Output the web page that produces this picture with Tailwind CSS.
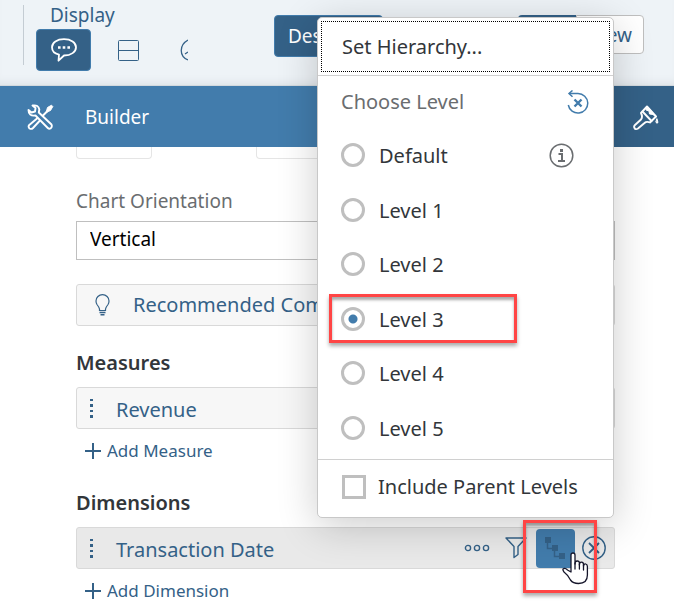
<!DOCTYPE html>
<html lang="en">
<head>
<meta charset="utf-8">
<title>Builder</title>
<script src="https://cdn.jsdelivr.net/npm/@tailwindcss/browser@4"></script>
</head>
<body class="relative min-h-screen overflow-x-hidden bg-white font-['Noto_Sans',sans-serif] text-[19px] leading-6 text-[#346187]">

<header class="flex h-[86px] items-start justify-between border-b border-[#d3d9de] bg-[#eef3f7] shadow-[inset_0_-8px_8px_-6px_#dde2e6]">
  <div class="flex">
    <div class="mt-[5px] ml-[23px] h-[60px] w-px bg-[#c4ccd3]"></div>
    <div class="ml-3 pt-[3px]">
      <div class="pl-[14px]">Display</div>
      <div class="mt-[2px] flex items-center">
        <button aria-label="Comments" class="flex h-[42px] w-[55px] items-center justify-center rounded border border-[#427cac] bg-[#346187]">
          <svg width="26" height="24" viewBox="0 0 26 24" fill="none" stroke="#fff" stroke-width="1.8" stroke-linejoin="round"><path d="M8 16.7C3.8 15.6 1 13 1 9.200C1 4.500 6 1.200 13 1.200S25 4.500 25 9.200S20 17.500 13 17.500L7.500 22.700Z"/><path d="M7 9.500h2.600M11.700 9.500h2.600M16.400 9.500h2.600" stroke-width="2.600"/></svg>
        </button>
        <button aria-label="Layout" class="ml-[27px] h-[21px] w-[21px]">
          <svg width="21" height="21" fill="none" stroke="#346187"><rect x=".5" y=".5" width="20" height="20" rx="1"/><path d="M0 10.500h21"/></svg>
        </button>
        <button aria-label="More display options" class="ml-[41px] h-6 w-2 overflow-hidden">
          <svg width="8" height="24" fill="none" stroke="#346187" stroke-width="1.300"><path d="M8 2C-1 7-1 18 8 22M5 16l3-2"/></svg>
        </button>
      </div>
    </div>
  </div>
  <div class="mt-[15px] mr-[30px] flex items-start">
    <button class="h-[42px] w-[109px] rounded border border-[#427cac] bg-[#346187] pl-[13px] text-left text-white">Design</button>
    <button aria-label="Edit mode" class="ml-[135px] h-[39px] w-[58px] rounded-l bg-[#346187]"></button>
    <button class="h-[39px] w-[68px] rounded-r border border-[#bfbfbf] bg-white pr-[11px] text-right">View</button>
  </div>
</header>

<div class="flex h-[61px] items-center bg-[#427cac] text-white">
  <svg class="ml-[27px]" width="27" height="26" viewBox="0 0 27 26" fill="none" stroke="#fff" stroke-width="1.900" stroke-linejoin="round" stroke-linecap="round"><path d="M5.500 1.500Q11.500 .5 12.300 5.500L11.800 8.500L24.500 20.500Q25.500 23 23.500 24.500Q22 25.200 20.800 24L8.500 11.500Q1.500 12.500 1.500 6L4.500 8.500L8 7.500L8.500 4Z"/><path d="M10 14.500L2 21.200Q1 23 2.500 24.500Q4.500 25.500 6 24L12.500 17"/><path d="M16 11.500L20 7.500"/><path d="M19.500 7L20.500 3.500L24.500 1.200L25.800 2.500L23.500 6.500L20 8Z" fill="#fff" stroke-width="1"/></svg>
  <h1 class="ml-[31px] flex-1">Builder</h1>
  <button aria-label="Styling" class="flex h-full w-[61px] items-center justify-center bg-[#346187]">
    <svg class="mt-[2px] ml-1" width="26" height="26" viewBox="0 0 26 26" fill="none" stroke="#fff" stroke-width="1.900" stroke-linejoin="round" stroke-linecap="round"><path d="M14 1.500L23 11.500L17 17.500Q13.500 16 11.500 18L5 23.500Q2.500 25 1.500 23Q.5 21.500 2 20L8 14.500Q10 12 8 8Z"/><path d="M9.500 6.500L18.500 16"/><path d="M14 1.500L13 5L16 6L16.500 9L20 9.500L23 11.500Z" fill="#fff" stroke-width="1"/><path d="M24 14L25 17.500Q24 19 23 17.500Z" fill="#fff" stroke-width="1"/></svg>
  </button>
</div>

<main class="pr-[59px] pl-[76px]">
  <div class="flex gap-[104px]">
    <div class="h-3 w-[76px] rounded-b border border-t-0 border-[#e5e5e5]"></div>
    <div class="h-3 w-[76px] rounded-b border border-t-0 border-[#e5e5e5]"></div>
  </div>
  <label for="orientation" class="mt-[30px] block text-[#6a6d70]">Chart Orientation</label>
  <select id="orientation" class="mt-2 block h-[39px] w-full appearance-none border border-[#bfbfbf] bg-white pb-[3px] pl-[13px] text-black"><option>Vertical</option><option>Horizontal</option></select>
  <button class="mt-6 flex h-[42px] w-full items-center rounded-[3px] border border-[#d9d9d9] bg-[#f7f7f7] pl-[18px]">
    <svg width="15" height="22" viewBox="0 0 15 22" fill="none" stroke="#346187" stroke-width="1.200"><path d="M4.500 16.500V15Q4.300 13.500 2 10.500Q1 9 1 7A6.500 6.300 0 0 1 14 7Q14 9 13 10.500Q10.700 13.500 10.500 15V16.500Z"/><path d="M4.500 18.500h6M5.500 20.800h4" stroke-width="1.600"/></svg>
    <span class="ml-[23px] text-[20px] leading-6 whitespace-nowrap">Recommended Com</span>
  </button>

  <h2 class="mt-[25px] text-[20px] leading-6 font-semibold text-[#32363a]">Measures</h2>
  <div class="mt-3 flex h-[42px] items-center rounded-[3px] border border-[#d9d9d9] bg-[#f7f7f7] pl-3">
    <svg class="ml-px" width="3" height="19" fill="#346187"><path d="M0 0h3v2H0zM0 5h3v3H0zM0 11h3v2H0zM0 16h3v3H0z"/></svg>
    <span class="mt-1 ml-[23px] text-[20px] leading-6">Revenue</span>
  </div>
  <button class="mt-[10px] flex items-center gap-[6px] pl-[9px] text-[17px]">
    <svg width="16" height="16" stroke="#346187" stroke-width="2"><path d="M0 8h16M8 0v16"/></svg>Add Measure
  </button>

  <h2 class="mt-7 text-[20px] leading-6 font-semibold text-[#32363a]">Dimensions</h2>
  <div class="mt-3 flex h-[42px] items-center rounded-[3px] border border-[#d9d9d9] bg-[#e9e9e9] pr-2 pl-3">
    <svg class="ml-px" width="3" height="19" fill="#346187"><path d="M0 0h3v2H0zM0 5h3v3H0zM0 11h3v2H0zM0 16h3v3H0z"/></svg>
    <span class="mt-1 ml-[23px] flex-1 text-[20px] leading-6">Transaction Date</span>
    <button aria-label="More"><svg width="26" height="8" fill="none" stroke="#346187" stroke-width="1.400"><circle cx="4" cy="4" r="2.600"/><circle cx="13" cy="4" r="2.600"/><circle cx="22" cy="4" r="2.600"/></svg></button>
    <button aria-label="Filter" class="ml-[15px]"><svg width="22" height="22" fill="none" stroke="#346187" stroke-width="1.400" stroke-linejoin="round"><path d="M1 1H21L13 9.500V17.500L9 20.500V9.500Z"/></svg></button>
    <div class="relative ml-[9px]">
      <button aria-label="Hierarchy" class="block h-[39px] w-[39px] rounded bg-[#427cac]">
        <svg width="39" height="39" fill="#346187"><path d="M9 8h6v6H9zM16 16h6v6H16zM23 24h6v6H23z"/><path d="M11.500 14v5.500H17M18.500 22v5.500H24" fill="none" stroke="#346187" stroke-width="1.500"/></svg>
      </button>
      <div class="pointer-events-none absolute -top-[9px] -left-[13px] z-20 h-[73px] w-[74px] border-3 border-[#ff4545] shadow-[0_3px_4px_#0005,inset_0_3px_3px_#0005]"></div>
      <svg class="pointer-events-none absolute top-[23px] left-[26px] z-30" width="27" height="33" viewBox="0 0 27 33" fill="#fff" stroke="#15152a" stroke-width="1.300" stroke-linejoin="round" stroke-linecap="round"><path d="M9 20V3Q9 1 11 1T13 3V12Q13 9 15.200 9T17.400 11V13Q17.500 10 19.500 10.200T21.500 12.500V14Q22 11.500 23.700 12T25.400 14.500V23Q25.400 31.500 16.500 31.500Q11 31.500 8.500 28Q6 23 2 20Q.5 18 1 17Q3 15.500 5.500 18Z"/><path d="M13 11v6M17.400 12v5M21.500 13v5" fill="none"/></svg>
    </div>
    <button aria-label="Remove" class="ml-[7px]"><svg width="24" height="24" fill="none" stroke="#346187" stroke-width="1.400"><circle cx="12" cy="12" r="11.200"/><path d="M7 7l10 10M17 7L7 17" stroke-width="1.800"/></svg></button>
  </div>
  <button class="mt-[10px] flex items-center gap-[6px] pl-[9px] text-[17px]">
    <svg width="16" height="16" stroke="#346187" stroke-width="2"><path d="M0 8h16M8 0v16"/></svg>Add Dimension
  </button>
</main>

<div class="absolute top-[17px] right-[60px] z-10 w-[297px] rounded-[5px] border border-[#c8c8c8] bg-white text-[20px] leading-6 text-[#32363a] shadow-[0_8px_40px_#0003]">
  <div class="border-b border-[#d0d0d0] p-[3px]">
    <button class="block h-[51px] w-full border border-dotted border-black pl-5 text-left">Set Hierarchy...</button>
  </div>
  <fieldset>
    <div class="flex h-[52px] items-center justify-between pr-6 pl-[23px]">
      <span class="text-[#6a6d70]">Choose Level</span>
      <button aria-label="Reset level"><svg width="22" height="24" viewBox="0 0 22 24" fill="none" stroke="#427cac" stroke-width="1.500"><path d="M2 3.500H11A9.800 9.800 0 1 1 1.300 15"/><path d="M5.500.5L2 3.500l3.500 3.300"/><path d="M7.500 9.500l7 7M14.500 9.500l-7 7" stroke-width="2.400"/></svg></button>
    </div>
    <div class="grid h-[327px] auto-rows-fr pl-[23px]">
      <div class="flex items-center justify-between pr-[39px]">
        <label class="flex items-center gap-[14px]"><input type="radio" name="level" class="h-6 w-6 appearance-none rounded-full border-3 border-[#bfbfbf] checked:bg-[radial-gradient(circle,#427cac_4px,#fff_5px)]"><span class="mt-[2px]">Default</span></label>
        <button aria-label="Information"><svg width="25" height="25" fill="none" stroke="#6a6d70" stroke-width="1.500"><circle cx="12.500" cy="12.500" r="11.300"/><path d="M9.500 11h3.500v7M9 18h7" stroke-width="2"/><path d="M11 7.500h3" stroke-width="3"/></svg></button>
      </div>
      <label class="flex items-center gap-[14px]"><input type="radio" name="level" class="h-6 w-6 appearance-none rounded-full border-3 border-[#bfbfbf] checked:bg-[radial-gradient(circle,#427cac_4px,#fff_5px)]"><span class="mt-[2px]">Level 1</span></label>
      <label class="flex items-center gap-[14px]"><input type="radio" name="level" class="h-6 w-6 appearance-none rounded-full border-3 border-[#bfbfbf] checked:bg-[radial-gradient(circle,#427cac_4px,#fff_5px)]"><span class="mt-[2px]">Level 2</span></label>
      <div class="relative flex">
        <label class="flex items-center gap-[14px]"><input type="radio" name="level" checked class="h-6 w-6 appearance-none rounded-full border-3 border-[#bfbfbf] checked:bg-[radial-gradient(circle,#427cac_4px,#fff_5px)]"><span class="mt-[2px]">Level 3</span></label>
        <div class="pointer-events-none absolute top-[2px] -left-3 h-[49px] w-[188px] border-3 border-[#ff4545] shadow-[0_3px_4px_#0005,inset_0_3px_3px_#0005]"></div>
      </div>
      <label class="flex items-center gap-[14px]"><input type="radio" name="level" class="h-6 w-6 appearance-none rounded-full border-3 border-[#bfbfbf] checked:bg-[radial-gradient(circle,#427cac_4px,#fff_5px)]"><span class="mt-[2px]">Level 4</span></label>
      <label class="flex items-center gap-[14px]"><input type="radio" name="level" class="h-6 w-6 appearance-none rounded-full border-3 border-[#bfbfbf] checked:bg-[radial-gradient(circle,#427cac_4px,#fff_5px)]"><span class="mt-[2px]">Level 5</span></label>
    </div>
  </fieldset>
  <div class="mt-1 border-t border-[#d0d0d0] pb-1 pl-6">
    <label class="flex h-[53px] items-center gap-3"><input type="checkbox" class="h-6 w-6 appearance-none border-3 border-[#bfbfbf] bg-white checked:bg-[#427cac]"><span>Include Parent Levels</span></label>
  </div>
</div>
</body>
</html>
